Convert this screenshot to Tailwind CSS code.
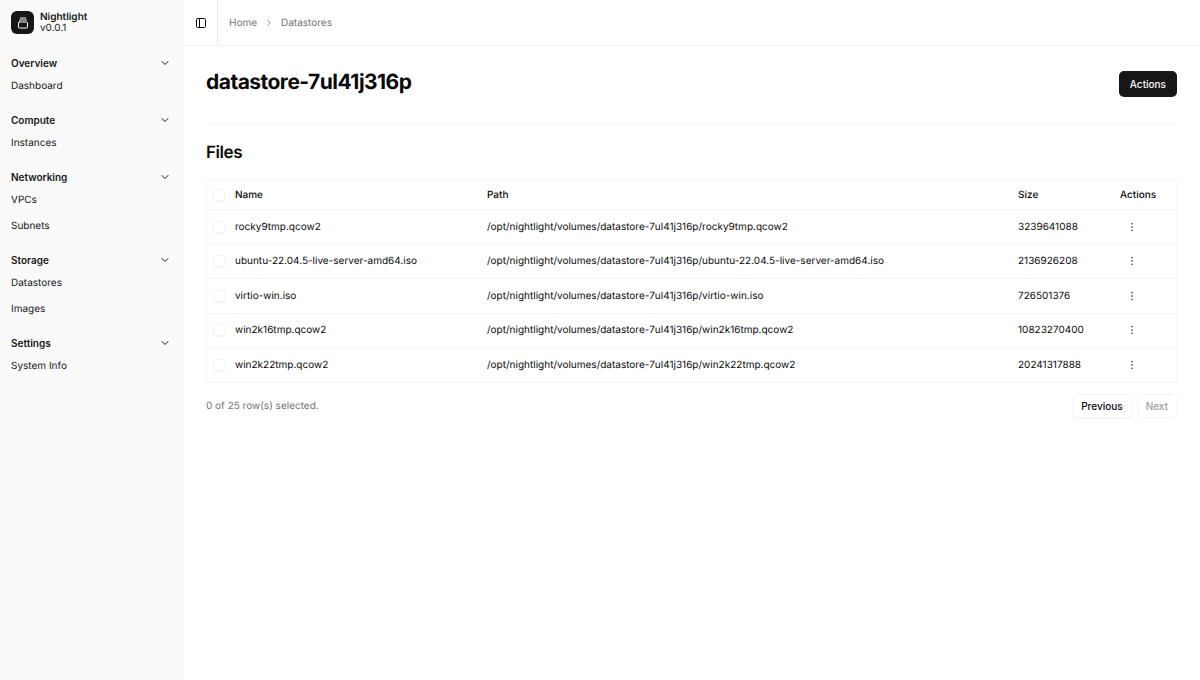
<!DOCTYPE html>
<html lang="en">
<head>
<meta charset="utf-8">
<meta name="viewport" content="width=device-width, initial-scale=1">
<title>Nightlight – Datastores</title>
<script src="https://cdn.jsdelivr.net/npm/@tailwindcss/browser@4"></script>
</head>
<body class="bg-white font-['Inter',sans-serif] text-[10px] leading-[14px] text-neutral-950 [font-optical-sizing:none] [text-rendering:geometricPrecision]">
<svg class="hidden" aria-hidden="true">
  <symbol id="chevron-down" viewBox="0 0 24 24"><path d="m6 9 6 6 6-6" fill="none" stroke="currentColor" stroke-width="2" stroke-linecap="round" stroke-linejoin="round"/></symbol>
  <symbol id="dots" viewBox="0 0 24 24"><g fill="currentColor" stroke="currentColor" stroke-width="1"><circle cx="12" cy="12" r="1.5"/><circle cx="12" cy="4" r="1.5"/><circle cx="12" cy="20" r="1.5"/></g></symbol>
</svg>
<div class="flex min-h-screen">
  <aside class="w-[184px] shrink-0 border-r border-neutral-100 bg-neutral-50 text-neutral-900">
    <a href="#" class="flex h-[45px] items-center gap-1.5 px-[11px]">
      <span class="flex size-[23px] items-center justify-center rounded-md bg-neutral-900 text-neutral-50">
        <svg class="size-3" viewBox="0 0 24 24" fill="none" stroke="currentColor" stroke-width="2" stroke-linecap="round" stroke-linejoin="round"><path d="M7 2h10"/><path d="M5 6h14"/><rect width="18" height="12" x="3" y="10" rx="2"/></svg>
      </span>
      <span class="flex flex-col leading-[11px]"><span class="font-semibold">Nightlight</span><span>v0.0.1</span></span>
    </a>
    <nav class="flex flex-col gap-[11px] pt-[6px]">
      <section>
        <button class="flex h-[23px] w-full items-center justify-between pl-[11px] pr-3 font-semibold">Overview<svg class="size-3"><use href="#chevron-down"/></svg></button>
        <ul class="flex flex-col gap-[3px]"><li><a href="#" class="flex h-[23px] items-center px-[11px]">Dashboard</a></li></ul>
      </section>
      <section>
        <button class="flex h-[23px] w-full items-center justify-between pl-[11px] pr-3 font-semibold">Compute<svg class="size-3"><use href="#chevron-down"/></svg></button>
        <ul class="flex flex-col gap-[3px]"><li><a href="#" class="flex h-[23px] items-center px-[11px]">Instances</a></li></ul>
      </section>
      <section>
        <button class="flex h-[23px] w-full items-center justify-between pl-[11px] pr-3 font-semibold">Networking<svg class="size-3"><use href="#chevron-down"/></svg></button>
        <ul class="flex flex-col gap-[3px]"><li><a href="#" class="flex h-[23px] items-center px-[11px]">VPCs</a></li><li><a href="#" class="flex h-[23px] items-center px-[11px]">Subnets</a></li></ul>
      </section>
      <section>
        <button class="flex h-[23px] w-full items-center justify-between pl-[11px] pr-3 font-semibold">Storage<svg class="size-3"><use href="#chevron-down"/></svg></button>
        <ul class="flex flex-col gap-[3px]"><li><a href="#" class="flex h-[23px] items-center px-[11px]">Datastores</a></li><li><a href="#" class="flex h-[23px] items-center px-[11px]">Images</a></li></ul>
      </section>
      <section>
        <button class="flex h-[23px] w-full items-center justify-between pl-[11px] pr-3 font-semibold">Settings<svg class="size-3"><use href="#chevron-down"/></svg></button>
        <ul class="flex flex-col gap-[3px]"><li><a href="#" class="flex h-[23px] items-center px-[11px]">System Info</a></li></ul>
      </section>
    </nav>
  </aside>
  <div class="flex min-w-0 flex-1 flex-col">
    <header class="flex h-[46px] items-center border-b border-neutral-100">
      <div class="flex w-[34px] items-center justify-center self-stretch border-r border-neutral-200">
        <button aria-label="Toggle sidebar" class="flex size-5 items-center justify-center"><svg class="size-3" viewBox="0 0 24 24" fill="none" stroke="currentColor" stroke-width="2" stroke-linecap="round" stroke-linejoin="round"><rect width="18" height="18" x="3" y="3" rx="2"/><path d="M9 3v18"/></svg></button>
      </div>
      <nav aria-label="Breadcrumb" class="flex items-center gap-[7px] pl-[11px] text-neutral-500">
        <a href="#">Home</a>
        <svg class="size-[10px]" viewBox="0 0 24 24" fill="none" stroke="currentColor" stroke-width="2" stroke-linecap="round" stroke-linejoin="round"><path d="m9 18 6-6-6-6"/></svg>
        <a href="#">Datastores</a>
      </nav>
    </header>
    <main class="pr-[23px] pl-[22px]">
      <div class="flex h-[78px] items-center justify-between border-b border-neutral-100 pb-0.5">
        <h1 class="pb-0.5 text-[21px] leading-7 font-bold tracking-tight">datastore-7ul41j316p</h1>
        <button class="h-[26px] rounded-[5px] bg-neutral-900 px-[11px] font-medium text-neutral-50">Actions</button>
      </div>
      <h2 class="mt-[19px] text-[17px] leading-5 font-semibold tracking-tight">Files</h2>
      <div class="mt-[17px] border border-neutral-100">
        <table class="w-full table-fixed border-collapse text-left">
          <colgroup><col class="w-[22px]"><col class="w-[252px]"><col><col class="w-[102px]"><col class="w-[62px]"></colgroup>
          <thead><tr class="h-[28px] border-b border-neutral-100"><th class="pl-[6px]"><input type="checkbox" aria-label="Select all" class="block size-3 appearance-none rounded-[3px] border border-neutral-100 shadow-xs"></th><th class="pl-[6px] font-medium">Name</th><th class="pl-[6px] font-medium">Path</th><th class="pl-[6px] font-medium">Size</th><th class="pl-[6px] font-medium">Actions</th></tr></thead>
          <tbody id="rows"></tbody>
        </table>
      </div>
      <div class="mt-[11px] flex items-center justify-between">
        <p class="text-neutral-500">0 of 25 row(s) selected.</p>
        <div class="flex gap-[5px]">
          <button class="h-6 rounded-[5px] border border-neutral-100 px-2 font-medium shadow-xs">Previous</button>
          <button disabled class="h-6 rounded-[5px] border border-neutral-100 px-2 font-medium text-neutral-400">Next</button>
        </div>
      </div>
    </main>
  </div>
</div>
<template id="row"><tr class="border-b border-neutral-100 last:border-b-0 odd:h-[35px] even:h-[34px]"><td class="pl-[6px]"><input type="checkbox" class="block size-3 appearance-none rounded-[3px] border border-neutral-100 shadow-xs"></td><td class="pl-[6px]"></td><td class="pl-[6px]"></td><td class="pl-[6px]"></td><td class="pl-[6px]"><button aria-label="Open row menu" class="flex size-[23px] items-center justify-center text-neutral-700"><svg class="size-[10px]"><use href="#dots"/></svg></button></td></tr></template>
<script>
const files = [["rocky9tmp.qcow2","3239641088"],["ubuntu-22.04.5-live-server-amd64.iso","2136926208"],["virtio-win.iso","726501376"],["win2k16tmp.qcow2","10823270400"],["win2k22tmp.qcow2","20241317888"]];
for (const [name, size] of files) {
  const row = document.getElementById("row").content.cloneNode(true);
  const cells = row.querySelectorAll("td");
  cells[0].firstElementChild.setAttribute("aria-label", "Select " + name);
  cells[1].textContent = name;
  cells[2].textContent = "/opt/nightlight/volumes/datastore-7ul41j316p/" + name;
  cells[3].textContent = size;
  document.getElementById("rows").append(row);
}
</script>
</body>
</html>
